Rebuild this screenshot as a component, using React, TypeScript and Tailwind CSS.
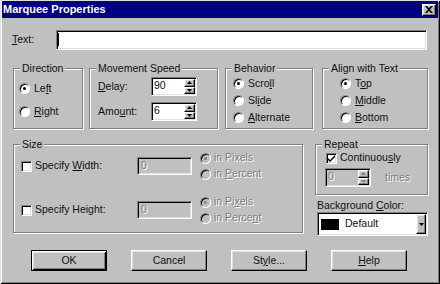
import React from 'react';

const raised =
  'border border-t-white border-l-white border-r-black border-b-black shadow-[inset_-1px_-1px_0_#808080,inset_1px_1px_0_#dfdfdf] bg-[#c0c0c0]';
const sunken =
  'border border-t-[#808080] border-l-[#808080] border-r-white border-b-white shadow-[inset_1px_1px_0_#000,inset_-1px_-1px_0_#dfdfdf]';
const etched = 'relative border border-[#808080] shadow-[inset_1px_1px_0_#fff,1px_1px_0_#fff]';
const dim = 'text-[#808080] [text-shadow:1px_1px_0_#fff]';

// text with one accelerator letter underlined
const Acc = ({ t, i }: { t: string; i?: number }) =>
  i === undefined ? (
    <>{t}</>
  ) : (
    <>
      {t.slice(0, i)}
      <span className="underline underline-offset-[1px]">{t[i]}</span>
      {t.slice(i + 1)}
    </>
  );

const Radio = ({ checked, disabled }: { checked?: boolean; disabled?: boolean }) => (
  <span
    className={`w-[11px] h-[11px] shrink-0 rounded-full border border-t-[#808080] border-l-[#808080] border-r-white border-b-white shadow-[inset_1px_1px_0_#000] flex items-center justify-center ${
      disabled ? 'bg-[#c0c0c0]' : 'bg-white'
    }`}
  >
    {checked && <span className={`w-[3px] h-[3px] rounded-full ${disabled ? 'bg-[#808080]' : 'bg-black'}`} />}
  </span>
);

const Check = ({ checked }: { checked?: boolean }) => (
  <span className={`w-[11px] h-[11px] shrink-0 bg-white flex items-center justify-center ${sunken}`}>
    {checked && (
      <svg width="7" height="7" viewBox="0 0 7 7">
        <path d="M0 3L2 5L7 0V2L2 7L0 5Z" fill="#000" />
      </svg>
    )}
  </span>
);

const Arrow = ({ up, disabled }: { up?: boolean; disabled?: boolean }) => (
  <svg width="5" height="3" viewBox="0 0 5 3">
    <path d={up ? 'M2.5 0L5 3H0Z' : 'M0 0H5L2.5 3Z'} fill={disabled ? '#808080' : '#000'} />
  </svg>
);

const SpinBox = ({ value, disabled }: { value: string; disabled?: boolean }) => (
  <div className={`${sunken} flex w-[46px] h-[19px] ${disabled ? 'bg-[#c0c0c0]' : 'bg-white'}`}>
    <span className={`flex-1 pl-[2px] pt-[1px] leading-[13px] ${disabled ? dim : ''}`}>{value}</span>
    <div className="flex flex-col w-[11px] my-[1px] mr-[1px]">
      <div className={`${raised} flex-1 flex items-center justify-center`}>
        <Arrow up disabled={disabled} />
      </div>
      <div className={`${raised} flex-1 flex items-center justify-center`}>
        <Arrow disabled={disabled} />
      </div>
    </div>
  </div>
);

const Group = ({ title, className, children }: { title: React.ReactNode; className: string; children?: React.ReactNode }) => (
  <div className={`${etched} ${className}`}>
    <span className="absolute -top-[7px] left-[6px] px-[2px] bg-[#c0c0c0] leading-[13px]">{title}</span>
    {children}
  </div>
);

const Option = ({ label, checked, disabled }: { label: React.ReactNode; checked?: boolean; disabled?: boolean }) => (
  <div className="flex items-center gap-[4px] h-[14px]">
    <Radio checked={checked} disabled={disabled} />
    <span className={`leading-[13px] ${disabled ? dim : ''}`}>{label}</span>
  </div>
);

const SizeRow = ({ label, px, pc }: { label: React.ReactNode; px: React.ReactNode; pc: React.ReactNode }) => (
  <div className="flex items-center h-[32px]">
    <div className="flex items-center gap-[3px] w-[116px]">
      <Check />
      <span>{label}</span>
    </div>
    <div className={`${sunken} bg-[#c0c0c0] w-[55px] h-[18px] pl-[3px] leading-[15px] ${dim}`}>0</div>
    <div className="flex flex-col ml-[8px]">
      <div className="h-[16px] flex items-center gap-[3px]">
        <Radio checked disabled />
        <span className={dim}>{px}</span>
      </div>
      <div className="h-[16px] flex items-center gap-[3px]">
        <Radio disabled />
        <span className={dim}>{pc}</span>
      </div>
    </div>
  </div>
);

const Button = ({ children, primary }: { children: React.ReactNode; primary?: boolean }) => (
  <button
    className={`w-[76px] h-[21px] flex items-center justify-center bg-[#c0c0c0] leading-none ${
      primary
        ? 'border border-black shadow-[inset_1px_1px_0_#fff,inset_-1px_-1px_0_#000,inset_2px_2px_0_#dfdfdf,inset_-2px_-2px_0_#808080]'
        : raised
    }`}
  >
    {children}
  </button>
);

export default function App() {
  return (
    <div className="w-[440px] h-[284px] bg-[#c0c0c0] flex flex-col overflow-hidden shadow-[inset_1px_1px_0_#dfdfdf,inset_-1px_-1px_0_#000,inset_2px_2px_0_#fff,inset_-2px_-2px_0_#808080] font-['Liberation_Sans',Arial,sans-serif] text-[10.5px] text-[#111]">
      {/* title bar */}
      <div className="mx-[2px] mt-[1px] h-[17px] bg-[#000080] flex items-center pl-[1px] pr-[2px]">
        <span className="text-white font-bold text-[11px] leading-none">Marquee Properties</span>
        <div className={`${raised} ml-auto w-[14px] h-[12px] flex items-center justify-center`}>
          <svg width="8" height="7" viewBox="0 0 8 7">
            <path d="M0 0H2L4 2L6 0H8L5 3.5L8 7H6L4 5L2 7H0L3 3.5Z" fill="#000" />
          </svg>
        </div>
      </div>

      {/* text field */}
      <div className="mt-[12px] pl-[12px] flex items-center">
        <span className="w-[44px]">
          <Acc t="Text:" i={0} />
        </span>
        <div className={`${sunken} bg-white w-[371px] h-[20px] flex items-start`}>
          <span className="ml-[1px] mt-[2px] w-[1px] h-[13px] bg-black" />
        </div>
      </div>

      {/* first row of groups */}
      <div className="mt-[18px] pl-[13px] flex">
        <Group title="Direction" className="w-[70px] h-[61px]">
          <div className="flex flex-col pl-[5px] pt-[12px] gap-[9px]">
            <Option label={<Acc t="Left" i={2} />} checked />
            <Option label={<Acc t="Right" i={0} />} />
          </div>
        </Group>
        <Group title="Movement Speed" className="ml-[6px] w-[129px] h-[61px]">
          <div className="flex flex-col pl-[8px] pt-[8px] gap-[6px]">
            <div className="flex items-center">
              <span className="w-[53px]">
                <Acc t="Delay:" i={0} />
              </span>
              <SpinBox value="90" />
            </div>
            <div className="flex items-center">
              <span className="w-[53px]">
                <Acc t="Amount:" i={3} />
              </span>
              <SpinBox value="6" />
            </div>
          </div>
        </Group>
        <Group title="Behavior" className="ml-[7px] w-[88px] h-[61px]">
          <div className="flex flex-col pl-[7px] pt-[7px] gap-[3px]">
            <Option label={<Acc t="Scroll" i={4} />} checked />
            <Option label={<Acc t="Slide" i={2} />} />
            <Option label={<Acc t="Alternate" i={0} />} />
          </div>
        </Group>
        <Group title="Align with Text" className="ml-[9px] w-[106px] h-[61px]">
          <div className="flex flex-col pl-[17px] pt-[7px] gap-[3px]">
            <Option label={<Acc t="Top" i={1} />} checked />
            <Option label={<Acc t="Middle" i={0} />} />
            <Option label={<Acc t="Bottom" i={0} />} />
          </div>
        </Group>
      </div>

      {/* second row */}
      <div className="mt-[15px] pl-[13px] flex items-start">
        <Group title="Size" className="w-[290px] h-[89px]">
          <div className="flex flex-col pl-[7px] pt-[5px] gap-[12px]">
            <SizeRow
              label={<Acc t="Specify Width:" i={8} />}
              px="in Pixels"
              pc={<Acc t="in Percent" i={3} />}
            />
            <SizeRow
              label={<Acc t="Specify Height:" i={11} />}
              px={<Acc t="in Pixels" i={5} />}
              pc={<Acc t="in Percent" i={8} />}
            />
          </div>
        </Group>
        <div className="ml-[12px] w-[113px] flex flex-col">
          <Group title="Repeat" className="h-[51px]">
            <div className="mt-[6px] pl-[10px] h-[14px] flex items-center gap-[3px]">
              <Check checked />
              <span>
                <Acc t="Continuously" i={9} />
              </span>
            </div>
            <div className="mt-[3px] pl-[9px] flex items-center">
              <SpinBox value="0" disabled />
              <span className={`ml-[14px] ${dim}`}>times</span>
            </div>
          </Group>
          <span className="mt-[4px] leading-[12px] ml-[2px]">
            <Acc t="Background Color:" i={11} />
          </span>
          <div className={`${sunken} bg-white mt-[1px] ml-[2px] w-[111px] h-[24px] flex items-center`}>
            <span className="ml-[3px] w-[18px] h-[11px] bg-black" />
            <span className="ml-[6px]">Default</span>
            <div className={`${raised} ml-auto mr-[1px] w-[10px] h-[20px] flex items-center justify-center`}>
              <Arrow />
            </div>
          </div>
        </div>
      </div>

      {/* buttons */}
      <div className="mt-[14px] pl-[31px] flex gap-[24px]">
        <Button primary>OK</Button>
        <Button>Cancel</Button>
        <Button>
          <Acc t="Style..." i={2} />
        </Button>
        <Button>
          <Acc t="Help" i={0} />
        </Button>
      </div>
    </div>
  );
}
